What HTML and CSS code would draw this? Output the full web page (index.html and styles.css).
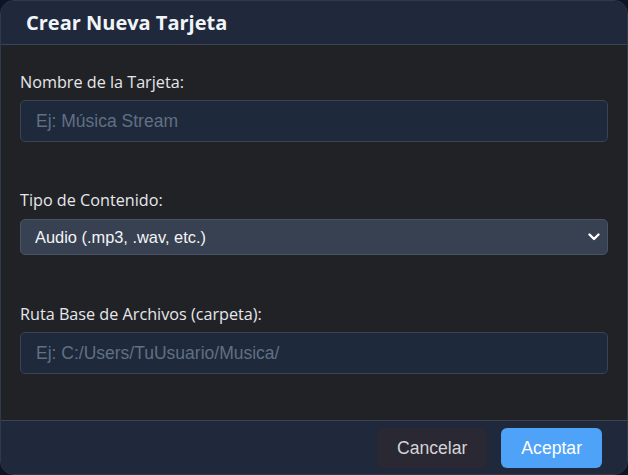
FILE: index.html
```html
<!DOCTYPE html>
<html lang="es">
<head>
<meta charset="utf-8">
<link rel="stylesheet" href="styles.css">
</head>
<body>
<div class="modal">
  <div class="modal-header">
    <h2 class="title">Crear Nueva Tarjeta</h2>
  </div>
  <div class="modal-body">
    <div class="group">
      <label class="label">Nombre de la Tarjeta:</label>
      <input class="field" type="text" placeholder="Ej: Música Stream">
    </div>
    <div class="group group-select">
      <label class="label">Tipo de Contenido:</label>
      <div class="select-wrap">
        <select class="select">
          <option>Audio (.mp3, .wav, etc.)</option>
        </select>
        <svg class="chevron" width="12" height="8" viewBox="0 0 12 8"><path d="M1.5 1.5 L6 6 L10.5 1.5" fill="none" stroke="#ffffff" stroke-width="2.4" stroke-linecap="round" stroke-linejoin="round"/></svg>
      </div>
    </div>
    <div class="group">
      <label class="label">Ruta Base de Archivos (carpeta):</label>
      <input class="field" type="text" placeholder="Ej: C:/Users/TuUsuario/Musica/">
    </div>
  </div>
  <div class="modal-footer">
    <button class="btn btn-cancel">Cancelar</button>
    <button class="btn btn-ok">Aceptar</button>
  </div>
</div>
</body>
</html>
```
FILE: styles.css
```css
html, body {
  margin: 0;
  padding: 0;
  background: #0e1424;
}
.modal {
  box-sizing: border-box;
  width: 628px;
  height: 475px;
  border: 1px solid #2f3a4d;
  border-radius: 14px;
  overflow: hidden;
  background: #212226;
  display: flex;
  flex-direction: column;
}
.modal-header {
  height: 43px;
  flex: none;
  background: #1f293b;
  border-bottom: 1px solid #3a4558;
  display: flex;
  align-items: center;
  padding: 0 25px;
}
.title {
  margin: 0;
  font-family: "Open Sans", sans-serif;
  font-weight: 700;
  font-size: 20px;
  color: #f1f5f9;
  line-height: 1;
  padding-top: 1px;
}
.modal-body {
  flex: 1;
  padding: 25px 19px 0 19px;
}
.group {
  display: flex;
  flex-direction: column;
  margin-bottom: 46px;
}
.group-select {
  margin-bottom: 47px;
}
.label {
  font-family: "Open Sans", sans-serif;
  font-size: 16.2px;
  line-height: 24px;
  color: #e5e7eb;
  margin-bottom: 6px;
}
.field {
  box-sizing: border-box;
  height: 42px;
  background: #1e293b;
  border: 1px solid #394455;
  border-radius: 5px;
  padding: 0 15px;
  font-family: "Liberation Sans", Arial, sans-serif;
  font-size: 17.5px;
  color: #e5e7eb;
  outline: none;
}
.field::placeholder {
  color: #617083;
}
.select-wrap {
  position: relative;
  margin-top: 1px;
}
.select {
  box-sizing: border-box;
  width: 100%;
  height: 36px;
  appearance: none;
  -webkit-appearance: none;
  background: #374151;
  border: 1px solid #485365;
  border-radius: 5px;
  padding: 0 14px;
  font-family: "Liberation Sans", Arial, sans-serif;
  font-size: 16.4px;
  color: #f3f4f6;
  outline: none;
}
.chevron {
  position: absolute;
  right: 8px;
  top: 14px;
}
.modal-footer {
  height: 54px;
  flex: none;
  background: #1f293b;
  border-top: 1px solid #3a4558;
  display: flex;
  align-items: center;
  justify-content: flex-end;
  gap: 14px;
  padding: 0 25px 0 0;
}
.btn {
  height: 40px;
  border: none;
  border-radius: 6px;
  padding: 0 20px;
  font-family: "Liberation Sans", Arial, sans-serif;
  font-size: 17.6px;
  cursor: pointer;
}
.btn-cancel {
  background: #2a2833;
  color: #d4d4d8;
}
.btn-ok {
  background: #4ea2f8;
  color: #ffffff;
}
```
